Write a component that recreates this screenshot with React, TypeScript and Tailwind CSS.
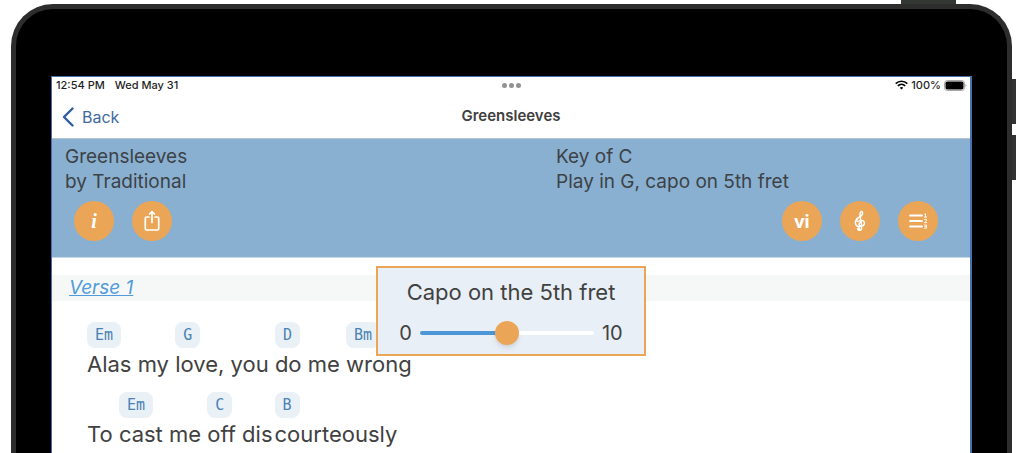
import { useState } from 'react';
import type { ReactNode } from 'react';

interface Segment {
  chord?: string;
  text: string;
}

const verse: Segment[][] = [
  [
    { chord: 'Em', text: 'Alas my ' },
    { chord: 'G', text: 'love, you ' },
    { chord: 'D', text: 'do me ' },
    { chord: 'Bm', text: 'wrong' },
  ],
  [
    { text: 'To ' },
    { chord: 'Em', text: 'cast me ' },
    { chord: 'C', text: 'off dis' },
    { chord: 'B', text: 'courteously' },
  ],
];

const RoundButton = ({ label, children }: { label: string; children: ReactNode }) => (
  <button
    type="button"
    aria-label={label}
    className="flex h-10 w-10 items-center justify-center rounded-full bg-[#eba557] text-white"
  >
    {children}
  </button>
);

const ShareIcon = () => (
  <svg width="20" height="22" viewBox="0 0 20 22" fill="none" stroke="currentColor" strokeWidth="1.7" strokeLinecap="round" strokeLinejoin="round">
    <path d="M7 7H4.5A1.2 1.2 0 0 0 3.3 8.2V18.8A1.2 1.2 0 0 0 4.5 20H15.5A1.2 1.2 0 0 0 16.7 18.8V8.2A1.2 1.2 0 0 0 15.5 7H13" />
    <path d="M10 12.5V2M7.5 4 10 1.5 12.5 4" />
  </svg>
);

const TrebleClefIcon = () => (
  <svg width="14" height="22" viewBox="0 0 14 22" fill="none" stroke="currentColor" strokeWidth="1.5" strokeLinecap="round" strokeLinejoin="round">
    <path d="M7.6 12.6C6 12.5 5.2 14.6 6.7 15.5C9 16.6 11.700 15.300 11.500 13C11.300 10.300 8 9.600 5.900 11C3.400 12.700 2.600 8.800 5.500 7.600C8 6.300 10 4.500 9.500 2.600C9 0.700 7.100 1.500 7 4.300C6.900 7 8.700 14 8.700 17.800C8.700 20.600 5.800 21 5.200 19.300" />
    <path d="M5.500 7.600C2.900 9.500 1.800 12 2.700 14.200C3.500 16.200 6 17 8.400 16.300" />
    <circle cx="5.700" cy="19" r="0.900" fill="currentColor" />
  </svg>
);

const NumberedListIcon = () => (
  <svg width="20" height="18" viewBox="0 0 20 18" fill="none" stroke="currentColor" strokeLinecap="round">
    <path d="M2 3.500H14M2 9H14M2 14.500H14" strokeWidth="1.800" />
    <path d="M16.500 2.200 17.500 1.700V5M16.300 5H18.700M16.300 7.300H18.400V8.900L16.300 10.700H18.700M16.300 13H18.500V16.200H16.300M16.800 14.600H18.500" strokeWidth="0.900" />
  </svg>
);

const WifiIcon = () => (
  <svg width="13" height="10" viewBox="0 0 13 10" fill="none" stroke="black" strokeWidth="1.6">
    <path d="M0.7 3.6C4 0.4 9 0.4 12.3 3.6" />
    <path d="M2.8 5.9C4.9 3.9 8.1 3.9 10.2 5.9" />
    <path d="M4.7 7.7 6.5 9.6 8.3 7.7C7.3 6.8 5.7 6.8 4.7 7.7Z" fill="black" stroke="none" />
  </svg>
);

const BatteryIcon = () => (
  <svg width="23" height="11" viewBox="0 0 23 11">
    <rect x="0.5" y="0.5" width="20" height="10" rx="2.8" fill="white" stroke="#a8a8a8" />
    <rect x="1.5" y="1.5" width="18" height="8" rx="1.8" fill="black" />
    <path d="M21.5 3.8C22.8 4.3 22.8 6.7 21.5 7.2Z" fill="#a8a8a8" />
  </svg>
);

const StatusBar = () => (
  <div className="grid h-[15px] grid-cols-3 items-center pl-1 pr-[3px] text-[11px] font-medium text-[#1f1f1f]">
    <div className="flex gap-[10px]">
      <span>12:54 PM</span>
      <span>Wed May 31</span>
    </div>
    <div className="flex justify-center gap-[2px]">
      <span className="h-[5px] w-[5px] rounded-full bg-[#929292]" />
      <span className="h-[5px] w-[5px] rounded-full bg-[#929292]" />
      <span className="h-[5px] w-[5px] rounded-full bg-[#929292]" />
    </div>
    <div className="flex items-center justify-end gap-[3px]">
      <WifiIcon />
      <span>100%</span>
      <BatteryIcon />
    </div>
  </div>
);

const NavBar = () => (
  <nav className="grid h-[47px] grid-cols-3 items-center border-b border-[#b5c4cf] px-[10px] pt-[3px]">
    <button type="button" className="flex items-center gap-2 text-base text-[#41699f]">
      <svg width="12" height="20" viewBox="0 0 12 20" fill="none" stroke="#2f5d9e" strokeWidth="2.4" strokeLinecap="round" strokeLinejoin="round">
        <path d="M10.5 1.5 2 10 10.5 18.5" />
      </svg>
      Back
    </button>
    <h1 className="text-center text-[15px] font-semibold text-[#404040]">Greensleeves</h1>
  </nav>
);

const SongHeader = () => (
  <header className="border-b border-[#c5d8e8] bg-[#89b0d1] pt-[5px] pb-4 text-[19px] leading-[25px] text-[#3d4246]">
    <div className="grid grid-cols-2">
      <div className="pl-[13px]">
        <p>Greensleeves</p>
        <p>by Traditional</p>
      </div>
      <div className="pl-[45px]">
        <p>Key of C</p>
        <p>Play in G, capo on 5th fret</p>
      </div>
    </div>
    <div className="mt-[7px] flex justify-between pl-[22px] pr-8">
      <div className="flex gap-[18px]">
        <RoundButton label="Song info">
          <span className="font-['Liberation_Serif',serif] text-xl font-bold italic">i</span>
        </RoundButton>
        <RoundButton label="Share">
          <ShareIcon />
        </RoundButton>
      </div>
      <div className="flex gap-[18px]">
        <RoundButton label="Roman numerals">
          <span className="font-['Open_Sans',sans-serif] text-lg font-bold">vi</span>
        </RoundButton>
        <RoundButton label="Notation">
          <TrebleClefIcon />
        </RoundButton>
        <RoundButton label="Verse order">
          <NumberedListIcon />
        </RoundButton>
      </div>
    </div>
  </header>
);

const CapoPopover = () => {
  const [fret, setFret] = useState(5);
  const fill = `${fret * 10}%`;

  return (
    <div className="absolute top-2 left-1/2 w-[270px] -translate-x-1/2 border-2 border-[#eba557] bg-[#e9eff6] pt-2 pb-1 text-[#414141]">
      <label htmlFor="capo" className="block text-center text-[22px] leading-8">
        Capo on the {fret}th fret
      </label>
      <div className="mt-2 flex items-center justify-center gap-2 text-xl leading-[34px]">
        <span>0</span>
        <input
          id="capo"
          type="range"
          min={0}
          max={10}
          value={fret}
          onChange={(e) => setFret(Number(e.target.value))}
          style={{ backgroundImage: `linear-gradient(to right, #4c96d7 ${fill}, #fff ${fill})` }}
          className="h-1 w-[174px] appearance-none rounded-full outline-none [&::-webkit-slider-thumb]:h-6 [&::-webkit-slider-thumb]:w-6 [&::-webkit-slider-thumb]:appearance-none [&::-webkit-slider-thumb]:rounded-full [&::-webkit-slider-thumb]:bg-[#eba557] [&::-webkit-slider-thumb]:shadow-md"
        />
        <span>10</span>
      </div>
    </div>
  );
};

// a chord that lands mid-word leaves a small gap between the syllables
const LyricLine = ({ segments }: { segments: Segment[] }) => (
  <div className="flex h-[70px]">
    {segments.map((segment) => (
      <div
        key={segment.text}
        className={segment.text.endsWith(' ') ? 'flex flex-col items-start' : 'flex flex-col items-start pr-[2px]'}
      >
        <div className="h-[26px]">
          {segment.chord && (
            <span className="block rounded-lg bg-[#e9f0f6] px-2 font-['DejaVu_Sans_Mono',monospace] text-[15px] leading-[26px] text-[#4a82b4]">
              {segment.chord}
            </span>
          )}
        </div>
        <span className="text-[22px] leading-8 whitespace-pre">{segment.text}</span>
      </div>
    ))}
  </div>
);

export default function App() {
  return (
    <div className="flex min-h-screen flex-col overflow-hidden bg-white pt-1 pr-3 pl-[11px] font-['Inter',sans-serif]">
      <div className="relative flex flex-1 flex-col rounded-t-[42px] border-x-[5px] border-t-[5px] border-[#2d2d2d] bg-black px-[35px] pt-[67px]">
        {/* hardware buttons */}
        <span className="absolute -top-[9px] right-[51px] h-1 w-[55px] bg-[#333835]" />
        <span className="absolute top-[70px] -right-[9px] h-[45px] w-1 bg-[#333333]" />
        <span className="absolute top-[126px] -right-[9px] h-[45px] w-1 bg-[#333333]" />

        <div className="flex flex-1 flex-col border-t border-r-2 border-l border-[#4870ae] bg-white">
          <StatusBar />
          <NavBar />
          <SongHeader />
          <main className="relative pt-[17px] text-[#414141]">
            <h2 className="bg-[#f6f8f8] pl-[17px] text-[19px] leading-[26px]">
              <a href="#verse-1" className="text-[#529bdb] italic underline">Verse 1</a>
            </h2>
            <section id="verse-1" className="pt-[21px] pl-[35px]">
              {verse.map((segments, i) => (
                <LyricLine key={i} segments={segments} />
              ))}
            </section>
            <CapoPopover />
          </main>
        </div>
      </div>
    </div>
  );
}
